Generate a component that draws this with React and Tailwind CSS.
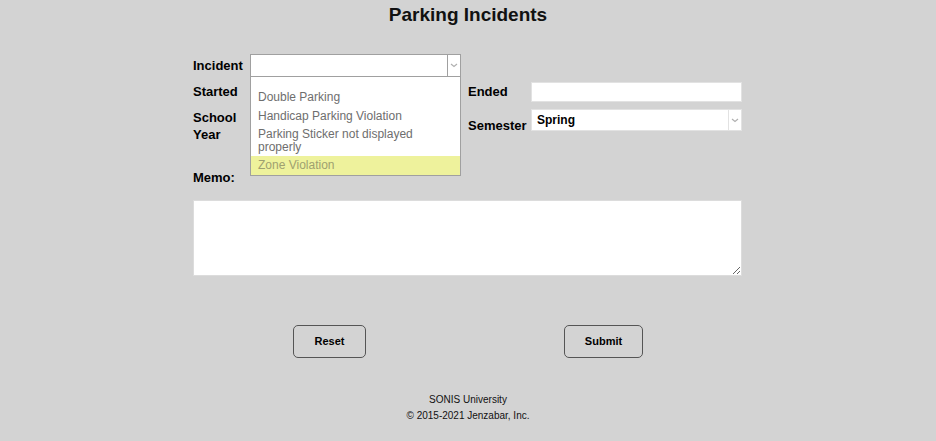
import React from "react"

function Chevron() {
  return (
    <svg width="8" height="5" viewBox="0 0 8 5" className="block">
      <path d="M1 1 L4 3.5 L7 1" fill="none" stroke="#b0b0b0" strokeWidth="1.2" />
    </svg>
  )
}

function FakeSelect({ value, border, className }) {
  return (
    <div className={`flex bg-white border ${border} ${className}`}>
      <div className="flex flex-1 items-center pl-[5px] text-[12px] font-bold text-black">
        {value}
      </div>
      <div className={`flex w-[13px] items-center justify-center border-l ${border}`}>
        <Chevron />
      </div>
    </div>
  )
}

const options = ["Double Parking", "Handicap Parking Violation"]

export default function App() {
  return (
    <div
      className="min-h-[441px] w-full bg-[#d3d3d3] text-black"
      style={{ fontFamily: '"Liberation Sans", Arial, sans-serif' }}
    >
      <h1 className="pt-[4px] text-center text-[19px] font-bold leading-[22px] text-[#111]">
        Parking Incidents
      </h1>

      <div className="mx-auto w-[550px] pr-[1px] pt-[28px]">
        {/* Incident */}
        <div className="relative flex h-[23px] items-center">
          <span className="w-[57px] pt-[1px] text-[13px] font-bold">Incident</span>
          <div className="relative h-[23px] w-[211px]">
            <FakeSelect value="" border="border-[#a0a0a0]" className="h-[23px] w-[211px]" />
            <div className="absolute left-0 top-[23px] z-10 w-[211px] border border-t-0 border-[#a0a0a0] bg-white text-[12px] leading-[13px] text-[#6e6e6e]">
              <div className="h-[11px]" />
              {options.map((o) => (
                <div key={o} className="px-[7px] py-[3px]">
                  {o}
                </div>
              ))}
              <div className="px-[7px] py-[2px]">Parking Sticker not displayed properly</div>
              <div className="bg-[#eef29c] px-[7px] py-[3px] text-[#9ea070]">Zone Violation</div>
            </div>
          </div>
        </div>

        {/* Started / Ended */}
        <div className="mt-[5px] flex h-[20px] items-center">
          <span className="w-[57px] text-[13px] font-bold">Started</span>
          <div className="h-[20px] w-[211px] border border-[#e2e2e2] bg-white" />
          <span className="ml-[7px] w-[63px] text-[13px] font-bold">Ended</span>
          <div className="h-[20px] w-[211px] border border-[#e2e2e2] bg-white" />
        </div>

        {/* School Year / Semester */}
        <div className="mt-[7px] flex">
          <span className="w-[57px] text-[13px] font-bold leading-[17px]">
            School
            <br />
            Year
          </span>
          <div className="h-[22px] w-[211px]" />
          <span className="ml-[7px] w-[63px] pt-[8px] text-[13px] font-bold leading-[17px]">
            Semester
          </span>
          <FakeSelect value="Spring" border="border-[#e2e2e2]" className="h-[22px] w-[211px]" />
        </div>

        {/* Memo */}
        <div className="mt-[26px] text-[13px] font-bold leading-[17px]">Memo:</div>
        <textarea className="mt-[14px] block h-[76px] w-[549px] border border-[#dcdcdc] bg-white outline-none" />

        {/* Buttons */}
        <div className="mt-[49px] flex h-[33px]">
          <button className="ml-[100px] h-[33px] w-[73px] rounded-[5px] border border-[#555] text-[11px] font-bold">
            Reset
          </button>
          <button className="ml-[198px] h-[33px] w-[79px] rounded-[5px] border border-[#555] text-[11px] font-bold">
            Submit
          </button>
        </div>
      </div>

      <div className="pt-[34px] text-center text-[10px] leading-[16px] text-[#111]">
        <div>SONIS University</div>
        <div>© 2015-2021 Jenzabar, Inc.</div>
      </div>
    </div>
  )
}
